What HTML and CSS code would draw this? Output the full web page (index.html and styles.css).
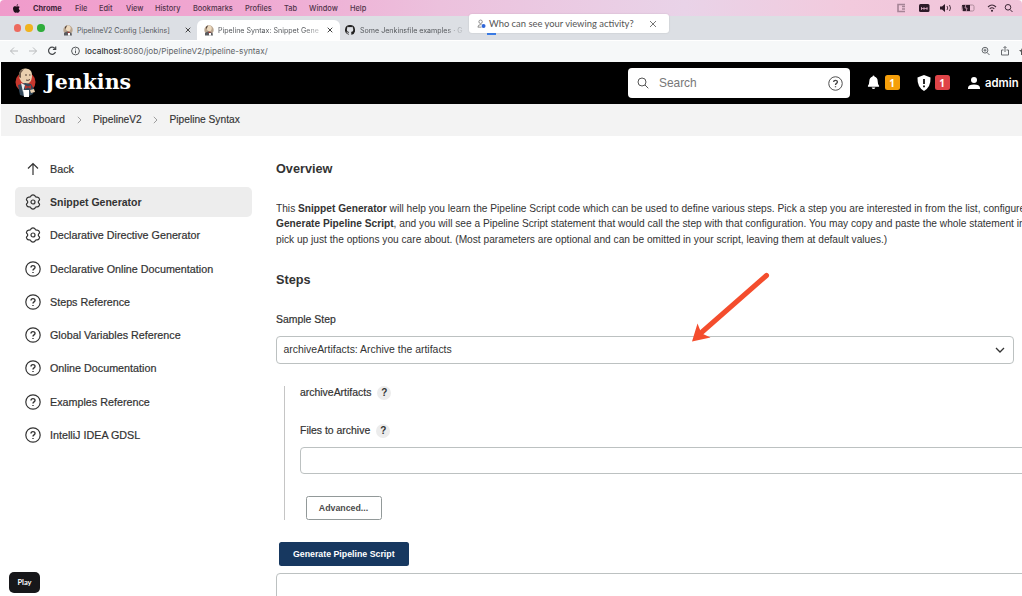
FILE: index.html
```html
<!DOCTYPE html>
<html lang="en">
<head>
<meta charset="utf-8">
<title>Pipeline Syntax: Snippet Generator</title>
<link rel="stylesheet" href="styles.css">
</head>
<body>
<svg class="defs" width="0" height="0">
  <symbol id="gear" viewBox="0 0 16 16"><path d="M6.300 1.400Q8 .3 9.700 1.400 10.200 3.300 12 3.100 14 2.900 14.600 5.300 14.600 6.300 13.600 7 13 8 13.600 9 14.600 9.700 14.600 10.700 14 13.100 12 12.900 10.200 12.700 9.700 14.600 8 15.700 6.300 14.600 5.800 12.700 4 12.900 2 13.100 1.400 10.700 1.400 9.700 2.400 9 3 8 2.400 7 1.400 6.300 1.400 5.300 2 2.900 4 3.100 5.800 3.300 6.300 1.400Z"/><circle cx="8" cy="8" r="2"/></symbol>
  <symbol id="help" viewBox="0 0 16 16"><circle cx="8" cy="8" r="7.2"/><path stroke-width="1.4" d="M6 6.500C6 4 10 4 10 6.400 10 8 8 7.800 8 9.500M8 11v1.100"/></symbol>
  <symbol id="butler" viewBox="0 0 22 30"><circle cx="10.5" cy="14" r="10" fill="#c8372d"/><path d="M4 8Q4 0 11 .5 18 1 17 9 16 16 11 16 5 15 4 8" fill="#e9cfae"/><path d="M4 9Q3 2 9 1L6 5 6 10" fill="#6b5848"/><path d="M10 7h2M14 7h1.500M11 12q2 1 4-.5" stroke="#554035" fill="none"/><path d="M3 17L10 15 16 16 19 21 18 26 12 29 5 27Z" fill="#33485a"/><path d="M6 15l4 2-2 7z" fill="#eee"/><path d="M10 17l3 1.600 3-1.600v4l-3-1.600-3 1.600z" fill="#b5332d"/><path d="M8 22h6v7H9z" fill="#fff"/><path d="M15 22l4-1 1 3-4 1z" fill="#e9cfae"/></symbol>
  <symbol id="butler-small" viewBox="0 0 10 11"><circle cx="5" cy="5" r="4.700" fill="#b9a58f"/><path d="M2.500 3Q3 .3 5.500.5 8 1 7.700 4 7 6.500 5 6.500 3 6 2.500 3" fill="#edd9bd"/><path d="M2 4Q1.500 1 4 .5L3 3z" fill="#4a3b32"/><path d="M1 8Q3 6 5 6.500L8.500 8 9 10.500H1z" fill="#5a5c60"/><path d="M5 8l2 0v2.500H5z" fill="#fff"/><path d="M4.500 6.800h2v1h-2z" fill="#b5332d"/></symbol>
</svg>

<header class="menubar">
  <svg class="apple" viewBox="0 0 10 11"><path d="M7 0Q5 .4 5 2.400 6.800 2.200 7 0M5 3Q3.500 2.300 2.300 2.900C.3 4 .4 7 1.700 9.200 3 11.200 3.500 10.500 5 10.300 6.700 10.700 7.300 11 8.400 9.400L9.200 7.700Q7.800 7 7.800 5.600T9 3.600Q7.500 2 5 3"/></svg>
  <nav class="menus"><b>Chrome</b><span>File</span><span>Edit</span><span>View</span><span>History</span><span>Bookmarks</span><span>Profiles</span><span>Tab</span><span>Window</span><span>Help</span></nav>
  <svg class="tray" viewBox="0 0 122 12"><g fill="none" stroke="#3d2736"><path stroke="#a58496" stroke-width="1.600" d="M8 2.500H1v7h7M5 4.500h3M5 7h3"/><path d="M50 4q1.500 2 0 4M52.500 3q2 3 0 6" stroke-width=".9"/><rect x="65" y="3" width="12" height="6" rx="1.500" stroke="#9c7c8c" stroke-width=".8"/><path d="M91 5q4-4 8 0M92.700 6.800q2.300-2 4.600 0" stroke-width="1.100"/><circle cx="111" cy="5.300" r="2.800"/><path d="M113 7.500l2.500 2.500"/></g><g fill="#2c1a28"><rect x="22" y="2" width="10.500" height="8" rx="1.500"/><path d="M43 4.500h2L48 2v8L45 7.500h-2zM65 3h8v6h-7z"/><circle cx="95" cy="8.700" r="1"/></g><path d="M24 6.500h6.500M24.500 5v3M27 5v3M30 5v3M69 2l-1 4h2l-1 4" stroke="#dba9c3" fill="none" stroke-width=".8"/></svg>
</header>

<div class="tabs">
  <div class="lights"><i class="red"></i><i class="amber"></i><i class="green"></i></div>
  <div class="tab first"><svg class="fav"><use href="#butler-small"/></svg><span class="title">PipelineV2 Config [Jenkins]</span><svg class="x" viewBox="0 0 6 6"><path d="M.7.7l4.600 4.600M5.300.7L.7 5.300"/></svg></div>
  <div class="tab active"><svg class="fav"><use href="#butler-small"/></svg><span class="title fade">Pipeline Syntax: Snippet Gene</span><svg class="x" viewBox="0 0 6 6"><path d="M.7.7l4.600 4.600M5.300.7L.7 5.300"/></svg></div>
  <div class="tab third"><svg class="github" viewBox="0 0 16 16"><path d="M8 0a8 8 0 0 0-2.500 15.600c.4.1.5-.2.5-.4V13.800c-2.200.4-2.700-1-2.900-1.500l-.8-1c-.5-.3 0-.5.3-.4 1.300.1 1.300 1.400 2.300 1.500.5 0 .9-.1 1.200-.4.1-.5.3-.8.5-1C4.800 10.800 3 10.100 3 7.100c0-.9.3-1.600.8-2.200 0-.2-.4-1 .1-2.100 0 0 .7-.2 2.200.8a8 8 0 0 1 4 0c1.500-1 2.200-.8 2.200-.8.4 1.100.1 1.900.1 2.100.5.6.8 1.300.8 2.200 0 3-1.900 3.700-3.700 3.900.3.3.6.7.6 1.500v2.700c0 .2.100.5.500.4A8 8 0 0 0 8 0"/></svg><span class="title fade gh">Some Jenkinsfile examples · G</span></div>
  <div class="peek"><i></i></div>
</div>

<div class="toolbar">
  <svg class="navicons" viewBox="0 0 76 12"><g fill="none" stroke="#b7b9bb"><path d="M10 6H2.500M6 2.500L2.500 6 6 9.500M21 6h7.500M25 2.500L28.500 6 25 9.500"/><path stroke="#45484b" stroke-width="1.200" d="M47 3.500A3.600 3.600 0 1 0 47.500 7M47.700 1.500v2.800h-2.800"/><circle cx="67.500" cy="6" r="3.900" stroke="#55585b"/><path stroke="#55585b" d="M67.500 5.500v2.700M67.500 3.500v1"/></g></svg>
  <span class="url"><b>localhost</b>:8080/job/PipelineV2/pipeline-syntax/</span>
  <svg class="tools" viewBox="0 0 42 12"><g fill="none" stroke="#666a6e"><circle cx="5" cy="5.200" r="2.900"/><path d="M7 7.500l2.500 2.500M3.500 5.200h3M5 3.700v3M23.500 5h-2v5h7V5h-2M25 7V1.700M23.500 3L25 1.500 26.500 3"/></g><path d="M42 3l-1 2h-2l2 2v3h1z" fill="#555"/></svg>
</div>

<div class="topbar">
  <svg class="logo"><use href="#butler"/></svg>
  <span class="brand">Jenkins</span>
  <div class="search"><svg class="mag" viewBox="0 0 12 12"><circle cx="5" cy="5" r="4"/><path d="M8 8l3.300 3.300"/></svg><span>Search</span><svg class="qs"><use href="#help"/></svg></div>
  <svg class="bell" viewBox="0 0 14 16"><path d="M7 .5q1 0 1 1Q11.500 2.500 11.500 6.500 11.500 10 13 11.500V12.500H1V11.500Q2.500 10 2.500 6.500 2.500 2.500 6 1.500 6 .5 7 .5M5 13.300h4Q8.500 15 7 15T5 13.300"/></svg>
  <span class="badge orange">1</span>
  <svg class="shield" viewBox="0 0 14 16"><path d="M7 0L13.500 2.500Q14 12 7 16 0 12 .5 2.500Z"/><path d="M7 4v5M7 10.500v1.800" stroke="#000" stroke-width="1.700"/></svg>
  <span class="badge crimson">1</span>
  <svg class="person" viewBox="0 0 12 12"><circle cx="6" cy="3" r="3"/><path d="M0 12V10.500Q.5 7.500 6 7.500T12 10.500V12Z"/></svg>
  <span class="admin">admin</span>
</div>

<nav class="crumbs"><span class="c1">Dashboard</span><svg viewBox="0 0 5 8"><path d="M.8.8L4 4 .8 7.200"/></svg><span class="c2">PipelineV2</span><svg viewBox="0 0 5 8"><path d="M.8.8L4 4 .8 7.200"/></svg><span class="c3">Pipeline Syntax</span></nav>

<div class="page">
  <aside class="side">
    <a><svg viewBox="0 0 16 16"><path d="M8 14V2.500M3 7.500l5-5 5 5"/></svg>Back</a>
    <a class="on"><svg><use href="#gear"/></svg>Snippet Generator</a>
    <a><svg><use href="#gear"/></svg>Declarative Directive Generator</a>
    <a><svg><use href="#help"/></svg>Declarative Online Documentation</a>
    <a><svg><use href="#help"/></svg>Steps Reference</a>
    <a><svg><use href="#help"/></svg>Global Variables Reference</a>
    <a><svg><use href="#help"/></svg>Online Documentation</a>
    <a><svg><use href="#help"/></svg>Examples Reference</a>
    <a><svg><use href="#help"/></svg>IntelliJ IDEA GDSL</a>
  </aside>
  <main class="main">
    <h2>Overview</h2>
    <p class="intro"><span>This <b>Snippet Generator</b> will help you learn the Pipeline Script code which can be used to define various steps. Pick a step you are interested in from the list, configure</span><span><b>Generate Pipeline Script</b>, and you will see a Pipeline Script statement that would call the step with that configuration. You may copy and paste the whole statement in</span><span>pick up just the options you care about. (Most parameters are optional and can be omitted in your script, leaving them at default values.)</span></p>
    <h2>Steps</h2>
    <div class="label">Sample Step</div>
    <div class="select"><span>archiveArtifacts: Archive the artifacts</span><svg viewBox="0 0 10 6"><path d="M1 1l4 4 4-4"/></svg></div>
    <section class="nested">
      <div class="label row">archiveArtifacts<i>?</i></div>
      <div class="label row files">Files to archive<i>?</i></div>
      <div class="input"></div>
      <button class="advanced">Advanced...</button>
    </section>
    <button class="generate">Generate Pipeline Script</button>
    <div class="output"></div>
  </main>
</div>

<div class="notice"><svg viewBox="0 0 10 10"><g fill="none" stroke="#777" stroke-width=".9"><circle cx="4" cy="2.500" r="1.900"/><path d="M5 5.500Q1 5.500 1 8.500H5"/></g><circle cx="7.300" cy="7.300" r="2.200" fill="#2f66d8"/></svg><span>Who can see your viewing activity?</span><svg class="close" viewBox="0 0 8 8"><path d="M1 1l6 6M7 1L1 7"/></svg></div>
<svg class="arrow" viewBox="0 0 80 74"><path d="M76.500 5.500L12 62" stroke="#f44d2d" stroke-width="5" stroke-linecap="round"/><path d="M2 71.500L7.500 53.500 10.500 61 13 64 20.500 67.500Z" fill="#f44d2d"/></svg>
<div class="play">Play</div>
</body>
</html>
```
FILE: styles.css
```css
* { box-sizing: border-box; }
body { margin: 0; width: 1022px; height: 596px; overflow: hidden; position: relative; background: #fff; color: #333; font-family: "Liberation Sans", Arial, sans-serif; font-size: 10.45px; }
svg { flex: none; display: block; }
.defs { position: absolute; }
.menubar { height: 16px; display: flex; align-items: center; padding: 0 6px 0 12px; border-radius: 4px 4px 0 0; background: linear-gradient(90deg, #f09bcb, #f0a9d2 25%, #ecc1dd 43%, #e9d3e8 67%, #f2cadd 83%, #f0c3d9); font: 500 7.4px Inter, sans-serif; color: #50334a; }
.apple { width: 9px; height: 9px; fill: #20101c; margin-right: 12px; }
.menus { display: grid; grid-template-columns: 42px 24px 27px 29px 38px 52px 39px 25px 41px 30px; flex: 1; white-space: nowrap; }
.menus b { color: #41243a; font-weight: 700; }
.tray { width: 122px; height: 12px; margin-right: -3px; }
.tabs { height: 24px; display: flex; align-items: flex-end; background: #dcdfe4; font: 7.1px Inter, sans-serif; color: #55585c; }
.lights { display: flex; gap: 4.700px; width: 56px; padding: 0 0 8.500px 13.500px; }
.lights i { width: 7.300px; height: 7.300px; border-radius: 50%; }
.red { background: #ed6a5e; }
.amber { background: #f0b31f; }
.green { background: #2fad3b; }
.tab { height: 20px; display: flex; align-items: center; white-space: nowrap; }
.first { width: 141px; padding-left: 7px; }
.active { width: 143px; padding-left: 7px; background: #fff; border-radius: 6px 6px 0 0; }
.third { width: 129px; padding-left: 5px; }
.fav { width: 10px; height: 11px; margin-right: 4px; }
.title { width: 104px; }
.active .title { width: 105px; }
.third .title { width: 104px; }
.fade { -webkit-mask-image: linear-gradient(90deg, #000 82%, #0003 98%); mask-image: linear-gradient(90deg, #000 82%, #0003 98%); }
.x { width: 6px; height: 6px; margin-left: 4px; stroke: #444; fill: none; }
.github { width: 10px; height: 10px; margin-right: 5px; fill: #222; }
.peek { height: 10px; width: 20px; padding: 3px 0 0 18px; }
.peek i { display: block; width: 9px; height: 2px; background: #3b7de8; }
.toolbar { height: 22px; display: flex; align-items: center; padding: 0 0 1px 8px; background: #f6f8f9; border-top: 1px solid #fff; font: 8.200px Inter, sans-serif; color: #606367; }
.navicons { width: 76px; height: 12px; margin-right: 1px; }
.url { flex: 1; }
.url b { color: #303336; font-weight: 500; }
.tools { width: 42px; height: 12px; }
.topbar { height: 41.500px; margin-left: 1px; display: flex; align-items: center; background: #000; color: #fff; padding-left: 14px; }
.logo { width: 22px; height: 30px; margin-right: 8px; }
.brand { font: bold 20.500px "DejaVu Serif", Georgia, serif; width: 583px; margin-top: -1px; }
.search { width: 221.500px; height: 30px; display: flex; align-items: center; border-radius: 4px; background: #fff; color: #777; font-size: 11.900px; padding: 1px 7px 0 9px; }
.search span { flex: 1; }
.mag { width: 12px; height: 12px; margin-right: 10px; stroke: #555; fill: none; }
.qs { width: 15px; height: 15px; stroke: #444; fill: none; }
.bell { width: 13px; height: 15px; fill: #fff; margin-left: 17px; }
.badge { width: 15px; height: 15px; border-radius: 2.500px; display: grid; place-items: center; font: bold 10px "Open Sans", sans-serif; }
.orange { background: #f59f0a; margin-left: 5px; }
.crimson { background: #df4448; margin-left: 4px; }
.shield { width: 14px; height: 16px; fill: #fff; margin-left: 17px; }
.person { width: 12px; height: 12px; fill: #fff; margin-left: 18px; }
.admin { font: 600 11.300px Inter, sans-serif; margin: 1px 0 0 5.500px; }
.crumbs { height: 32.500px; margin-left: 1px; padding-left: 14px; display: flex; align-items: center; background: #f3f3f3; font-size: 10.200px; -webkit-text-stroke: .15px #333; }
.crumbs span { width: 62px; }
.crumbs .c2 { width: 60px; margin-left: 11px; }
.crumbs .c3 { width: 90px; margin-left: 11.500px; }
.crumbs svg { width: 5px; height: 8px; fill: none; stroke: #888; stroke-width: .8; }
.page { display: flex; height: 460px; }
.side { width: 276px; flex: none; padding: 18.200px 24px 0 15px; display: flex; flex-direction: column; gap: 3.750px; font-size: 10.750px; -webkit-text-stroke: .2px #333; }
.side a { height: 29.500px; flex: none; display: flex; align-items: center; gap: 9px; padding-left: 10px; border-radius: 5px; }
.side svg { width: 16px; height: 16px; fill: none; stroke: #333; stroke-width: 1.200; }
.side .on { background: #ededed; font-weight: 700; font-size: 10.500px; -webkit-text-stroke: 0; }
.main { width: 746px; overflow: hidden; padding-top: 25px; display: flex; flex-direction: column; align-items: flex-start; }
h2 { margin: 0; font-size: 12.700px; line-height: 16px; }
.intro { margin: 24px 0 25px; line-height: 15.400px; white-space: nowrap; font-size: 10.180px; }
.intro span { display: block; }
.label { height: 14px; margin-top: 24.500px; line-height: 14px; -webkit-text-stroke: .2px #333; }
.select { width: 737.500px; height: 28px; flex: none; margin-top: 9px; display: flex; align-items: center; justify-content: space-between; border: 1px solid #bcc1c1; border-radius: 4px; padding: 0 8px 0 6.500px; }
.select svg { width: 10px; height: 6px; fill: none; stroke: #333; stroke-width: 1.300; }
.nested { width: 746px; height: 134px; margin: 22px 0 0 8px; padding-left: 15px; border-left: 1px solid #c5c5c5; flex: none; }
.row { display: flex; align-items: center; gap: 6px; margin-top: 0; }
.row i { width: 14px; height: 14px; border-radius: 50%; background: #ececec; font: bold 10px "Liberation Sans", sans-serif; display: grid; place-items: center; -webkit-text-stroke: 0; }
.files { margin-top: 24px; }
.input { height: 27px; margin-top: 9.500px; border: 1px solid #bcc1c1; border-radius: 4px; }
button { font: bold 8.800px "Liberation Sans", sans-serif; padding: 0; border-radius: 2.500px; }
.advanced { width: 76px; height: 24px; margin: 22px 0 0 5.500px; background: #fff; border: 1px solid #929999; color: #4c4c4c; display: block; }
.generate { width: 129.500px; height: 24px; flex: none; margin: 22px 0 0 3px; background: #173860; color: #fff; border: 0; }
.output { width: 760px; height: 40px; flex: none; margin-top: 7.500px; border: 1px solid #bcc1c1; border-radius: 4px; }
.notice { position: absolute; left: 469px; top: 14px; width: 200px; height: 19px; border-radius: 3px; background: #fff; display: flex; align-items: center; padding: 0 12px 0 8px; font: 9.400px Lato, sans-serif; color: #555; box-shadow: 0 0 2px #0002; }
.notice svg { width: 9px; height: 10px; margin-right: 3px; }
.notice span { flex: 1; white-space: nowrap; }
.notice .close { width: 8px; height: 8px; margin: 0; stroke: #666; stroke-width: .9; }
.arrow { position: absolute; left: 690px; top: 270px; width: 80px; height: 74px; }
.play { position: absolute; left: 9px; top: 571.500px; width: 31px; height: 21.500px; border-radius: 5px; background: #17171a; color: #fff; display: grid; place-items: center; font: bold 7.500px Lato, sans-serif; }
```
